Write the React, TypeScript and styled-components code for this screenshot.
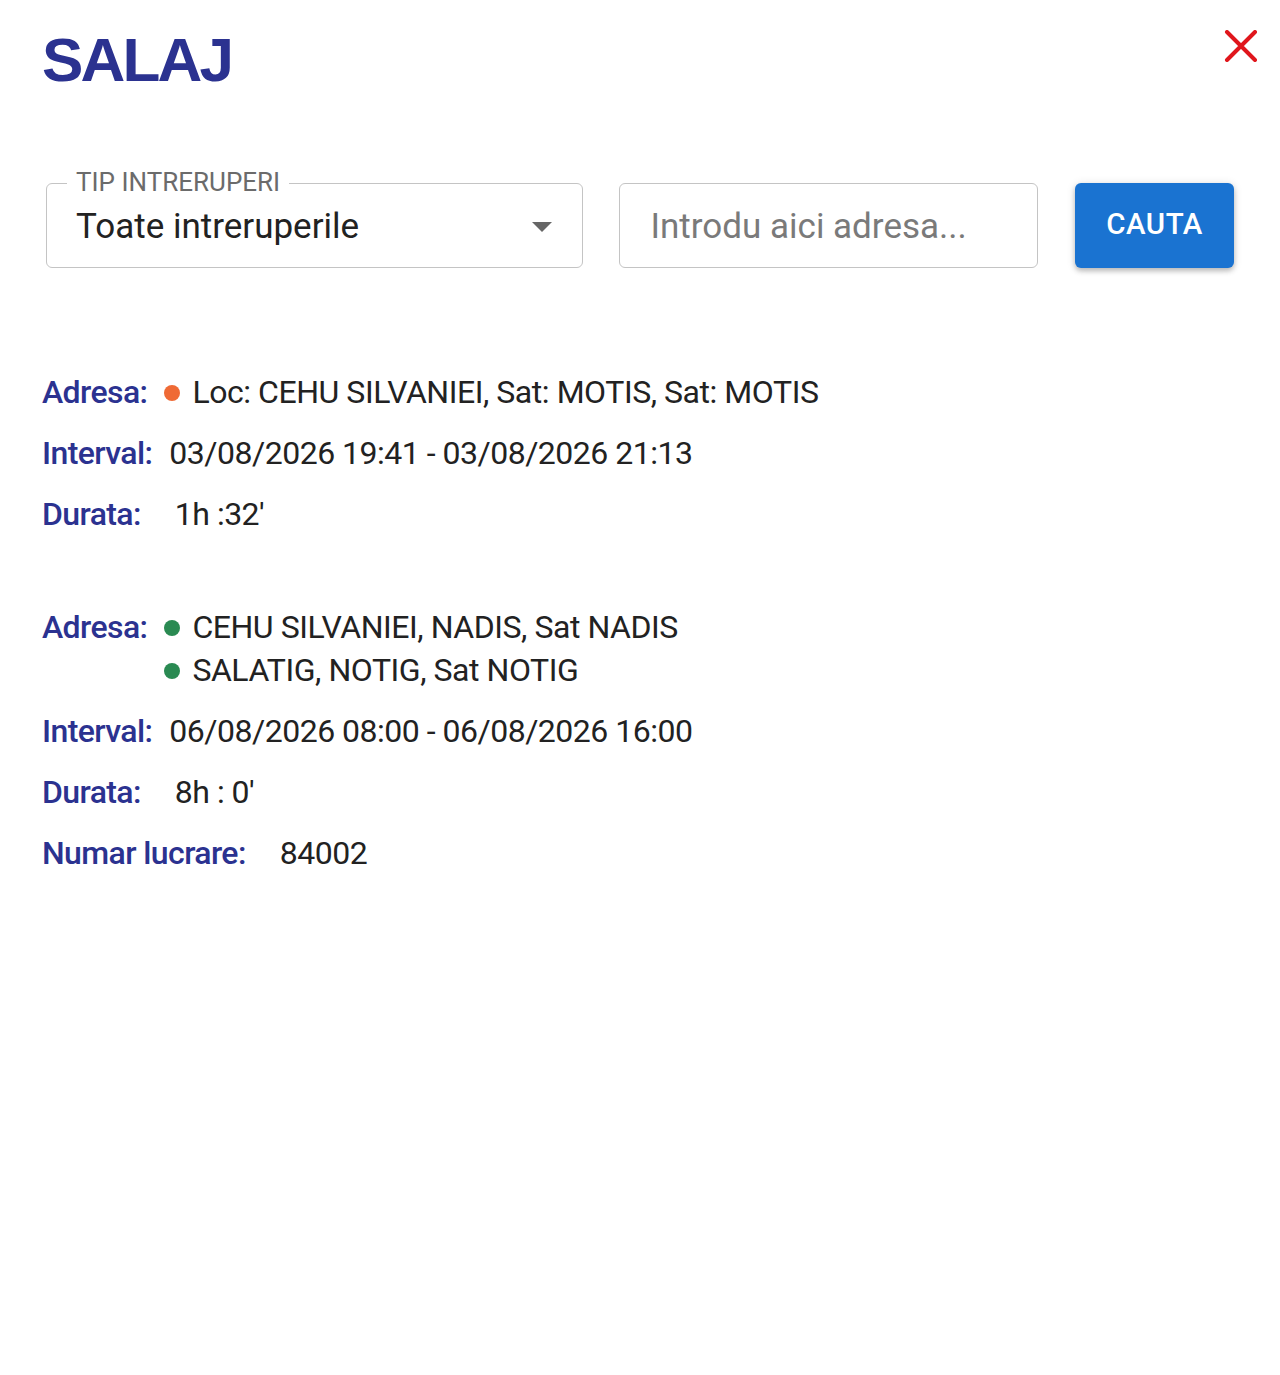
import React from 'react'
import styled, { createGlobalStyle } from 'styled-components'

const GlobalStyle = createGlobalStyle`
  html, body {
    margin: 0;
    padding: 0;
    background: #fff;
  }
  body {
    font-family: Roboto, "Noto Sans", sans-serif;
    color: #222;
  }
`

const Page = styled.div`
  width: 1280px;
  min-height: 1375px;
  box-sizing: border-box;
  padding: 0 46px 0 42px;
`

const Header = styled.div`
  display: flex;
  justify-content: space-between;
  align-items: flex-start;
  height: 150px;
`

const Title = styled.h1`
  margin: 29px 0 0 0;
  font-family: "Liberation Sans", Arial, sans-serif;
  font-weight: 700;
  font-size: 62px;
  line-height: 1;
  letter-spacing: -2.8px;
  color: #2b3290;
`

const CloseButton = styled.button`
  margin: 30px -24px 0 0;
  padding: 0;
  border: none;
  background: none;
  width: 34px;
  height: 32px;
  cursor: pointer;
`

const Filters = styled.div`
  display: flex;
  align-items: stretch;
  gap: 36px;
  margin-top: 33px;
  padding-left: 4px;
`

const Field = styled.div<{ width: number }>`
  position: relative;
  width: ${(p) => p.width}px;
  height: 85px;
  box-sizing: border-box;
  border: 1.5px solid #c4c4c4;
  border-radius: 6px;
  display: flex;
  align-items: center;
  padding: 2px 30px 0 29px;
`

const FieldLabel = styled.span`
  position: absolute;
  top: -17px;
  left: 20px;
  padding: 0 9px;
  background: #fff;
  font-size: 26px;
  line-height: 30px;
  color: #6b6b6b;
`

const SelectValue = styled.span`
  flex: 1;
  font-size: 35px;
  color: #222;
`

const Arrow = styled.span`
  width: 0;
  height: 0;
  border-left: 10px solid transparent;
  border-right: 10px solid transparent;
  border-top: 10px solid #666;
`

const Placeholder = styled.span`
  font-size: 35px;
  padding-left: 2px;
  color: #7a7a7a;
`

const SearchButton = styled.button`
  width: 159px;
  height: 85px;
  margin-left: 1px;
  border: none;
  border-radius: 6px;
  background: #1a73d1;
  color: #fff;
  font-family: Roboto, sans-serif;
  font-weight: 500;
  font-size: 29.5px;
  letter-spacing: 0.5px;
  box-shadow: 0 3px 5px rgba(0, 0, 0, 0.22), 0 1px 10px rgba(0, 0, 0, 0.12);
  padding-bottom: 4px;
`

const Results = styled.div`
  margin-top: 103px;
  display: flex;
  flex-direction: column;
  gap: 70px;
`

const Entry = styled.div`
  display: flex;
  flex-direction: column;
  gap: 18px;
`

const Row = styled.div`
  display: flex;
  align-items: flex-start;
  font-size: 32px;
  line-height: 43px;
`

const Label = styled.span`
  font-weight: 500;
  color: #2b3290;
  letter-spacing: -0.6px;
  margin-right: 17px;
`

const Value = styled.span<{ indent?: number }>`
  color: #222;
  padding-left: ${(p) => p.indent ?? 0}px;
  letter-spacing: -0.5px;
`

const AddressList = styled.div`
  display: flex;
  flex-direction: column;
`

const AddressItem = styled.div`
  display: flex;
  align-items: center;
  gap: 12px;
  color: #222;
  letter-spacing: -0.45px;
`

const Dot = styled.span<{ color: string }>`
  width: 16px;
  height: 16px;
  border-radius: 50%;
  background: ${(p) => p.color};
  flex: none;
`

const ORANGE = '#ef6a35'
const GREEN = '#2a8a52'

export default function App() {
  return (
    <>
      <GlobalStyle />
      <Page>
        <Header>
          <Title>SALAJ</Title>
          <CloseButton aria-label="close">
            <svg width="34" height="32" viewBox="0 0 34 32">
              <path d="M3 2 L31 30 M31 2 L3 30" stroke="#e0161c" strokeWidth="4" strokeLinecap="round" />
            </svg>
          </CloseButton>
        </Header>

        <Filters>
          <Field width={537}>
            <FieldLabel>TIP INTRERUPERI</FieldLabel>
            <SelectValue>Toate intreruperile</SelectValue>
            <Arrow />
          </Field>
          <Field width={420}>
            <Placeholder>Introdu aici adresa...</Placeholder>
          </Field>
          <SearchButton>CAUTA</SearchButton>
        </Filters>

        <Results>
          <Entry>
            <Row>
              <Label>Adresa:</Label>
              <AddressList>
                <AddressItem>
                  <Dot color={ORANGE} />
                  Loc: CEHU SILVANIEI, Sat: MOTIS, Sat: MOTIS
                </AddressItem>
              </AddressList>
            </Row>
            <Row>
              <Label>Interval:</Label>
              <Value>03/08/2026 19:41 - 03/08/2026 21:13</Value>
            </Row>
            <Row>
              <Label>Durata:</Label>
              <Value indent={17}>1h :32'</Value>
            </Row>
          </Entry>

          <Entry>
            <Row>
              <Label>Adresa:</Label>
              <AddressList>
                <AddressItem>
                  <Dot color={GREEN} />
                  CEHU SILVANIEI, NADIS, Sat NADIS
                </AddressItem>
                <AddressItem>
                  <Dot color={GREEN} />
                  SALATIG, NOTIG, Sat NOTIG
                </AddressItem>
              </AddressList>
            </Row>
            <Row>
              <Label>Interval:</Label>
              <Value>06/08/2026 08:00 - 06/08/2026 16:00</Value>
            </Row>
            <Row>
              <Label>Durata:</Label>
              <Value indent={17}>8h : 0'</Value>
            </Row>
            <Row>
              <Label>Numar lucrare:</Label>
              <Value indent={17}>84002</Value>
            </Row>
          </Entry>
        </Results>
      </Page>
    </>
  )
}
